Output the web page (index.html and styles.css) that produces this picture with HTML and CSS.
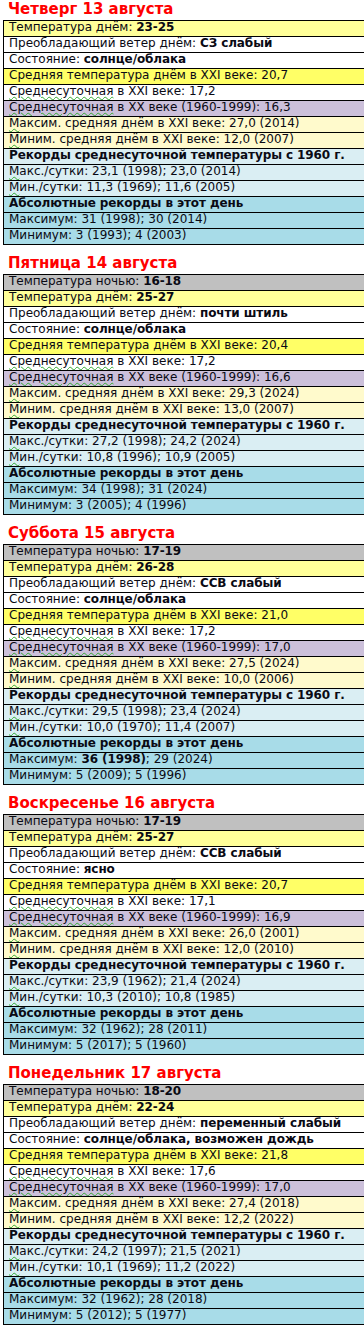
FILE: index.html
```html
<!DOCTYPE html>
<html lang="ru">
<head>
<meta charset="utf-8">
<title>Прогноз</title>
<link rel="stylesheet" href="styles.css">
</head>
<body>

<section class="day">
  <h2 class="day-title">Четверг 13 августа</h2>
  <div class="sheet">
    <div class="row r-day">Температура днём: <b>23-25</b></div>
    <div class="row r-white">Преобладающий ветер днём: <b>СЗ слабый</b></div>
    <div class="row r-white">Состояние: <b>солнце/облака</b></div>
    <div class="row r-avg">Средняя температура днём в XXI веке: 20,7</div>
    <div class="row r-white"><span class="sq">Среднесуточная</span> в XXI веке: 17,2</div>
    <div class="row r-lav"><span class="sq">Среднесуточная</span> в XX веке (1960-1999): 16,3</div>
    <div class="row r-cream"><span class="sq">М</span>аксим. средняя днём в XXI веке: 27,0 (2014)</div>
    <div class="row r-cream"><span class="sq">М</span>иним. средняя днём в XXI веке: 12,0 (2007)</div>
    <div class="row r-blue"><b>Рекорды среднесуточной температуры с 1960 г.</b></div>
    <div class="row r-blue"><span class="sq">М</span>акс./сутки: 23,1 (1998); 23,0 (2014)</div>
    <div class="row r-blue"><span class="sq">М</span>ин./сутки: 11,3 (1969); 11,6 (2005)</div>
    <div class="row r-aqua"><b>Абсолютные рекорды в этот день</b></div>
    <div class="row r-aqua">Максимум: 31 (1998); 30 (2014)</div>
    <div class="row r-aqua">Минимум: 3 (1993); 4 (2003)</div>
  </div>
</section>

<section class="day">
  <h2 class="day-title">Пятница 14 августа</h2>
  <div class="sheet">
    <div class="row r-night">Температура ночью: <b>16-18</b></div>
    <div class="row r-day">Температура днём: <b>25-27</b></div>
    <div class="row r-white">Преобладающий ветер днём: <b>почти штиль</b></div>
    <div class="row r-white">Состояние: <b>солнце/облака</b></div>
    <div class="row r-avg">Средняя температура днём в XXI веке: 20,4</div>
    <div class="row r-white"><span class="sq">Среднесуточная</span> в XXI веке: 17,2</div>
    <div class="row r-lav"><span class="sq">Среднесуточная</span> в XX веке (1960-1999): 16,6</div>
    <div class="row r-cream"><span class="sq">М</span>аксим. средняя днём в XXI веке: 29,3 (2024)</div>
    <div class="row r-cream"><span class="sq">М</span>иним. средняя днём в XXI веке: 13,0 (2007)</div>
    <div class="row r-blue"><b>Рекорды среднесуточной температуры с 1960 г.</b></div>
    <div class="row r-blue"><span class="sq">М</span>акс./сутки: 27,2 (1998); 24,2 (2024)</div>
    <div class="row r-blue"><span class="sq">М</span>ин./сутки: 10,8 (1996); 10,9 (2005)</div>
    <div class="row r-aqua"><b>Абсолютные рекорды в этот день</b></div>
    <div class="row r-aqua">Максимум: 34 (1998); 31 (2024)</div>
    <div class="row r-aqua">Минимум: 3 (2005); 4 (1996)</div>
  </div>
</section>

<section class="day">
  <h2 class="day-title">Суббота 15 августа</h2>
  <div class="sheet">
    <div class="row r-night">Температура ночью: <b>17-19</b></div>
    <div class="row r-day">Температура днём: <b>26-28</b></div>
    <div class="row r-white">Преобладающий ветер днём: <b>ССВ слабый</b></div>
    <div class="row r-white">Состояние: <b>солнце/облака</b></div>
    <div class="row r-avg">Средняя температура днём в XXI веке: 21,0</div>
    <div class="row r-white"><span class="sq">Среднесуточная</span> в XXI веке: 17,2</div>
    <div class="row r-lav"><span class="sq">Среднесуточная</span> в XX веке (1960-1999): 17,0</div>
    <div class="row r-cream"><span class="sq">М</span>аксим. средняя днём в XXI веке: 27,5 (2024)</div>
    <div class="row r-cream"><span class="sq">М</span>иним. средняя днём в XXI веке: 10,0 (2006)</div>
    <div class="row r-blue"><b>Рекорды среднесуточной температуры с 1960 г.</b></div>
    <div class="row r-blue"><span class="sq">М</span>акс./сутки: 29,5 (1998); 23,4 (2024)</div>
    <div class="row r-blue"><span class="sq">М</span>ин./сутки: 10,0 (1970); 11,4 (2007)</div>
    <div class="row r-aqua"><b>Абсолютные рекорды в этот день</b></div>
    <div class="row r-aqua">Максимум: <b>36 (1998)</b>; 29 (2024)</div>
    <div class="row r-aqua">Минимум: 5 (2009); 5 (1996)</div>
  </div>
</section>

<section class="day">
  <h2 class="day-title">Воскресенье 16 августа</h2>
  <div class="sheet">
    <div class="row r-night">Температура ночью: <b>17-19</b></div>
    <div class="row r-day">Температура днём: <b>25-27</b></div>
    <div class="row r-white">Преобладающий ветер днём: <b>ССВ слабый</b></div>
    <div class="row r-white">Состояние: <b>ясно</b></div>
    <div class="row r-avg">Средняя температура днём в XXI веке: 20,7</div>
    <div class="row r-white"><span class="sq">Среднесуточная</span> в XXI веке: 17,1</div>
    <div class="row r-lav"><span class="sq">Среднесуточная</span> в XX веке (1960-1999): 16,9</div>
    <div class="row r-cream"><span class="sq">М</span>аксим. средняя днём в XXI веке: 26,0 (2001)</div>
    <div class="row r-cream"><span class="sq">М</span>иним. средняя днём в XXI веке: 12,0 (2010)</div>
    <div class="row r-blue"><b>Рекорды среднесуточной температуры с 1960 г.</b></div>
    <div class="row r-blue"><span class="sq">М</span>акс./сутки: 23,9 (1962); 21,4 (2024)</div>
    <div class="row r-blue"><span class="sq">М</span>ин./сутки: 10,3 (2010); 10,8 (1985)</div>
    <div class="row r-aqua"><b>Абсолютные рекорды в этот день</b></div>
    <div class="row r-aqua">Максимум: 32 (1962); 28 (2011)</div>
    <div class="row r-aqua">Минимум: 5 (2017); 5 (1960)</div>
  </div>
</section>

<section class="day">
  <h2 class="day-title">Понедельник 17 августа</h2>
  <div class="sheet">
    <div class="row r-night">Температура ночью: <b>18-20</b></div>
    <div class="row r-day">Температура днём: <b>22-24</b></div>
    <div class="row r-white">Преобладающий ветер днём: <b>переменный слабый</b></div>
    <div class="row r-white">Состояние: <b>солнце/облака, возможен дождь</b></div>
    <div class="row r-avg">Средняя температура днём в XXI веке: 21,8</div>
    <div class="row r-white"><span class="sq">Среднесуточная</span> в XXI веке: 17,6</div>
    <div class="row r-lav"><span class="sq">Среднесуточная</span> в XX веке (1960-1999): 17,0</div>
    <div class="row r-cream"><span class="sq">М</span>аксим. средняя днём в XXI веке: 27,4 (2018)</div>
    <div class="row r-cream"><span class="sq">М</span>иним. средняя днём в XXI веке: 12,2 (2022)</div>
    <div class="row r-blue"><b>Рекорды среднесуточной температуры с 1960 г.</b></div>
    <div class="row r-blue"><span class="sq">М</span>акс./сутки: 24,2 (1997); 21,5 (2021)</div>
    <div class="row r-blue"><span class="sq">М</span>ин./сутки: 10,1 (1969); 11,2 (2022)</div>
    <div class="row r-aqua"><b>Абсолютные рекорды в этот день</b></div>
    <div class="row r-aqua">Максимум: 32 (1962); 28 (2018)</div>
    <div class="row r-aqua">Минимум: 5 (2012); 5 (1977)</div>
  </div>
</section>

</body>
</html>
```

FILE: styles.css
```css
html, body {
  margin: 0;
  padding: 0;
  background: #ffffff;
}

body {
  padding-left: 3px;
  font-family: "DejaVu Sans", Verdana, sans-serif;
  font-size: 12px;
  color: #0a0a14;
}

.day {
  margin-top: 9px;
}

.day:first-child {
  margin-top: 0;
}

.day-title {
  margin: 0;
  padding: 0 0 2px 5px;
  font-size: 15px;
  line-height: 18px;
  font-weight: bold;
  color: #ff0000;
}

.sheet {
  border-top: 1px solid #000;
  border-left: 1px solid #000;
}

.row {
  height: 13px;
  line-height: 13px;
  padding: 0 0 2px 5px;
  border-bottom: 1px solid #000;
  white-space: nowrap;
  overflow: hidden;
}

.row b {
  font-weight: bold;
  letter-spacing: -0.1px;
}

.sq {
  text-decoration: underline wavy #33aa33;
  text-decoration-thickness: 1px;
  text-underline-offset: 1px;
}

.r-night { background: #c0c0c0; }
.r-day   { background: #ffff99; }
.r-white { background: #ffffff; }
.r-avg   { background: #ffff66; }
.r-lav   { background: #ccc0da; }
.r-cream { background: #fffacc; }
.r-blue  { background: #daeef3; }
.r-aqua  { background: #a8dce8; }
```
